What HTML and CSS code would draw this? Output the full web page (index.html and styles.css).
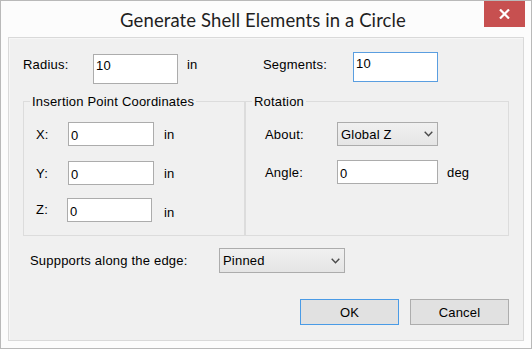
FILE: index.html
```html
<!DOCTYPE html>
<html>
<head>
<meta charset="utf-8">
<link rel="stylesheet" href="styles.css">
</head>
<body>
<div class="window">
  <div class="titlebar">
    <div class="title">Generate Shell Elements in a Circle</div>
    <div class="close">
      <svg width="11" height="10" viewBox="0 0 11 10"><path d="M1 0.5 L10 9.5 M10 0.5 L1 9.5" stroke="#fff" stroke-width="2.2"/></svg>
    </div>
  </div>
  <div class="panel">
    <div class="row-top">
      <div class="lbl lbl-radius">Radius:</div>
      <div class="box box-radius">10</div>
      <div class="unit unit-radius">in</div>
      <div class="lbl lbl-seg">Segments:</div>
      <div class="box box-seg focus">10</div>
    </div>
    <div class="groups">
      <fieldset class="group group-left">
        <legend>Insertion Point Coordinates</legend>
        <div class="grow grow-x">
          <div class="lbl lbl-xyz">X:</div>
          <div class="box box-small box-xyz">0</div>
          <div class="unit unit-xyz">in</div>
        </div>
        <div class="grow grow-y">
          <div class="lbl lbl-xyz">Y:</div>
          <div class="box box-small box-xyz">0</div>
          <div class="unit unit-xyz">in</div>
        </div>
        <div class="grow grow-z">
          <div class="lbl lbl-z">Z:</div>
          <div class="box box-small box-z">0</div>
          <div class="unit unit-z">in</div>
        </div>
      </fieldset>
      <fieldset class="group group-right">
        <legend>Rotation</legend>
        <div class="grow grow-x">
          <div class="lbl lbl-rot">About:</div>
          <div class="select select-about">
            <span>Global Z</span>
            <svg width="9" height="6" viewBox="0 0 9 6"><path d="M0.7 0.7 L4.5 4.7 L8.3 0.7" fill="none" stroke="#4a4a4a" stroke-width="1.4"/></svg>
          </div>
        </div>
        <div class="grow grow-angle">
          <div class="lbl lbl-rot">Angle:</div>
          <div class="box box-small box-angle">0</div>
          <div class="unit unit-deg">deg</div>
        </div>
      </fieldset>
    </div>
    <div class="row-support">
      <div class="lbl lbl-support">Suppports along the edge:</div>
      <div class="select select-support">
        <span>Pinned</span>
        <svg width="9" height="6" viewBox="0 0 9 6"><path d="M0.7 0.7 L4.5 4.7 L8.3 0.7" fill="none" stroke="#4a4a4a" stroke-width="1.4"/></svg>
      </div>
    </div>
    <div class="row-buttons">
      <div class="btn btn-default">OK</div>
      <div class="btn">Cancel</div>
    </div>
  </div>
</div>
</body>
</html>
```

FILE: styles.css
```css
* { box-sizing: border-box; }
html, body { margin: 0; padding: 0; background: #fcfcfc; }
body {
  font-family: "Liberation Sans", Arial, sans-serif;
  font-size: 13px;
  line-height: 15px;
  letter-spacing: 0.2px;
  color: #000;
}
.window {
  width: 532px;
  height: 349px;
  border: 1px solid #b9b9b9;
  background: #fcfcfc;
  display: flex;
  flex-direction: column;
}
.titlebar {
  height: 36px;
  display: flex;
  align-items: flex-start;
  flex: none;
}
.title {
  flex: 1;
  text-align: center;
  font-family: "Lato", "Open Sans", sans-serif;
  font-size: 18.5px;
  line-height: 22px;
  letter-spacing: 0.1px;
  padding-top: 8px;
  padding-left: 41px;
  color: #1f1f1f;
}
.close {
  width: 41px;
  height: 26px;
  margin-right: 6px;
  background: #c75050;
  display: flex;
  align-items: center;
  justify-content: center;
}
.panel {
  height: 304px;
  margin: 0 7px;
  border: 1px solid #d9d9d9;
  background: #f0f0f0;
  display: flex;
  flex-direction: column;
  box-shadow: inset 1px 1px 0 #f6f6f6;
}
.lbl, .unit { white-space: nowrap; }
.box {
  background: #fff;
  border: 1px solid #acacac;
  padding: 1px 2px;
}
.box.focus { border-color: #5a9ee0; }
.box-small {
  display: flex;
  align-items: center;
  padding: 2px 2px 0 2px;
}

/* top row */
.row-top {
  display: flex;
  align-items: flex-start;
  padding-left: 14px;
}
.lbl-radius { width: 70px; margin-top: 19px; }
.box-radius { width: 85px; height: 30px; margin-top: 16px; padding-top: 3px; }
.unit-radius { width: 76px; margin-left: 9px; margin-top: 19px; }
.lbl-seg { width: 90px; margin-top: 19px; }
.box-seg { width: 85px; height: 30px; margin-top: 14px; padding-top: 3px; }

/* groups */
.groups {
  display: flex;
  margin-top: 10px;
  padding-left: 14px;
}
.group {
  margin: 0;
  padding: 0;
  min-width: 0;
  border: 1px solid #dcdcdc;
  height: 142px;
}
.group legend {
  padding: 0 2px;
  line-height: 15px;
}
.group-left { width: 222px; padding-left: 12px; }
.group-left legend { margin-left: -6px; }
.group-right { width: 264px; padding-left: 19px; }
.group-right legend { margin-left: -13px; }
.grow { display: flex; align-items: center; }
.grow-x { margin-top: 13px; }
.grow-y { margin-top: 15px; }
.grow-z { margin-top: 13px; }
.grow-angle { margin-top: 14px; }
.lbl-xyz { width: 32px; }
.box-xyz { width: 86px; height: 24px; }
.unit-xyz { margin-left: 10px; }
.lbl-z { width: 31px; margin-top: -2px; }
.box-z { width: 85px; height: 24px; }
.unit-z { margin-left: 12px; margin-top: 5px; }
.lbl-rot { width: 72px; }
.box-angle { width: 101px; height: 24px; }
.unit-deg { margin-left: 9px; }

.select {
  display: flex;
  align-items: center;
  justify-content: space-between;
  border: 1px solid #acacac;
  background: linear-gradient(#f0f0f0, #e5e5e5);
  padding: 0 4px 0 3px;
}
.select svg { flex: none; }
.select-about { width: 101px; height: 24px; }
.select-support { width: 126px; height: 25px; }

/* support row */
.row-support {
  display: flex;
  align-items: center;
  padding-left: 21px;
  margin-top: 12px;
}
.lbl-support { width: 189px; }

/* buttons */
.row-buttons {
  display: flex;
  justify-content: flex-end;
  gap: 11px;
  padding-right: 14px;
  margin-top: 26px;
}
.btn {
  width: 99px;
  height: 26px;
  border: 1px solid #adadad;
  background: #e1e1e1;
  display: flex;
  align-items: center;
  justify-content: center;
}
.btn-default { border-color: #4a9be6; }
```
